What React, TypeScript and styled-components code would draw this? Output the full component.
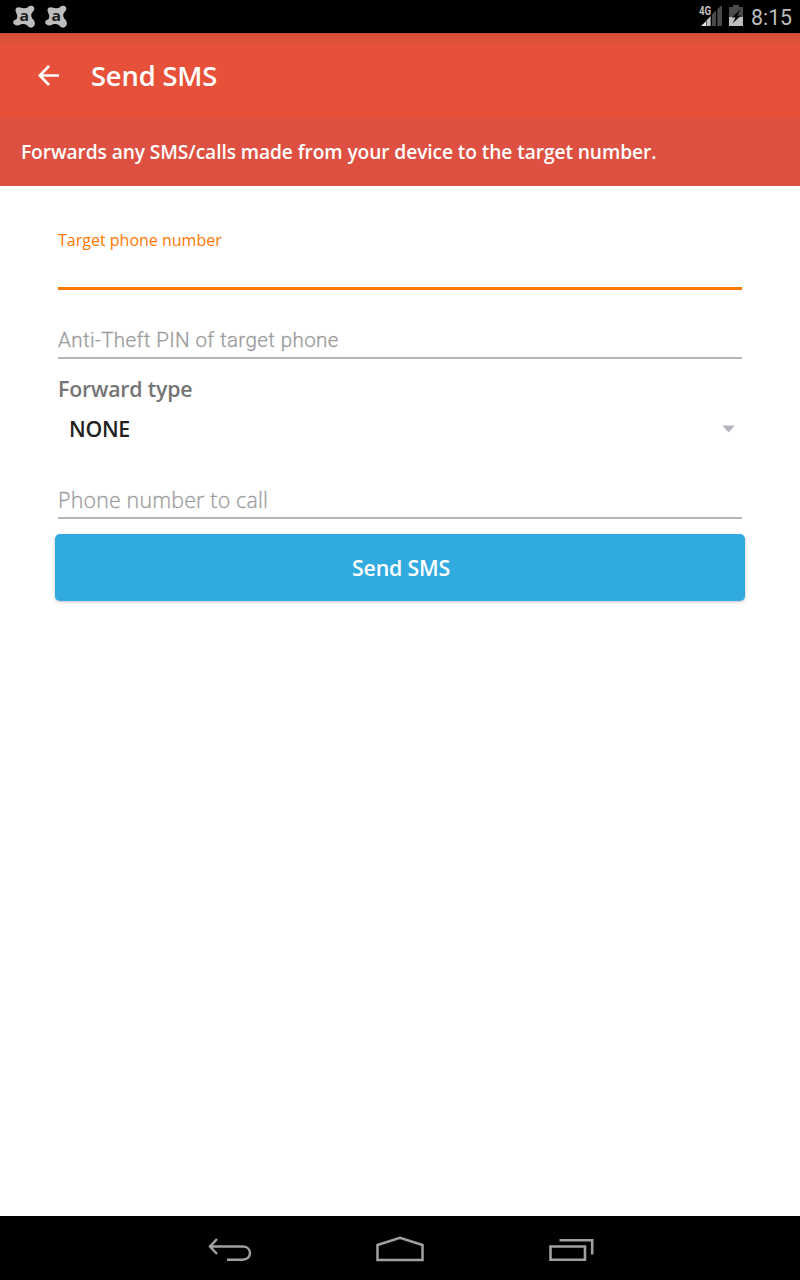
import React from "react";
import styled, { createGlobalStyle } from "styled-components";

const GlobalStyle = createGlobalStyle`
  * { box-sizing: border-box; }
  body { margin: 0; background: #fff; font-family: "Open Sans", sans-serif; }
`;

const Screen = styled.div`
  display: flex;
  flex-direction: column;
  width: 800px;
  height: 1280px;
  background: #fff;
`;

const StatusBar = styled.div`
  display: flex;
  justify-content: space-between;
  height: 33px;
  padding: 0 8px 0 12px;
  background: #000;
`;

const StatusGroup = styled.div<{ $gap: number }>`
  display: flex;
  gap: ${(p) => p.$gap}px;
  padding-top: 4px;
  svg { display: block; flex: none; }
`;

const Clock = styled.span`
  font-family: Roboto, sans-serif;
  font-size: 21.3px;
  line-height: 28px;
  width: 41px;
  margin-left: 1px;
  color: #bebebe;
  white-space: nowrap;
`;

const AppBar = styled.header`
  display: flex;
  align-items: center;
  height: 85px;
  padding-left: 37px;
  background: linear-gradient(#c74a33 0, #d64f39 2px, #dc5139 7px, #df5139 12px, #e75139 12px, #e75139 100%);
  svg { display: block; flex: none; }
`;

const Title = styled.h1`
  margin: 1px 0 0 31px;
  font-size: 27.3px;
  line-height: 36px;
  font-weight: 600;
  letter-spacing: -0.15px;
  color: #fff;
`;

const Banner = styled.p`
  margin: 0;
  height: 68px;
  padding-left: 21px;
  background: #de5142;
  color: #fff;
  font-size: 19.2px;
  line-height: 67px;
  font-weight: 600;
  letter-spacing: -0.1px;
  white-space: nowrap;
`;

const Form = styled.main`
  display: flex;
  flex-direction: column;
  flex: 1;
  padding: 44px 55px 0;
`;

const Field = styled.div<{ $height: number; $active?: boolean }>`
  display: flex;
  align-items: ${(p) => (p.$active ? "flex-start" : "flex-end")};
  height: ${(p) => p.$height}px;
  margin: 0 3px;
  border-bottom: ${(p) => (p.$active ? "3px solid #ff7800" : "2px solid #b5b6bd")};
`;

const FloatingLabel = styled.label`
  font-size: 16px;
  line-height: 20px;
  color: #ff7800;
`;

const Hint = styled.label<{ $roboto?: boolean }>`
  font-family: ${(p) => (p.$roboto ? "Roboto" : '"Open Sans"')}, sans-serif;
  font-weight: 300;
  font-size: ${(p) => (p.$roboto ? 20.6 : 21.33)}px;
  line-height: 24px;
  letter-spacing: ${(p) => (p.$roboto ? 0.37 : 0.2)}px;
  padding-bottom: 5px;
  color: #9c9c9c;
  -webkit-text-stroke: 0.3px #9c9c9c;
`;

const SelectLabel = styled.label`
  margin: 15px 3px 0;
  font-size: 21.33px;
  line-height: 30px;
  font-weight: 600;
  letter-spacing: -0.2px;
  color: #757575;
`;

const Select = styled.div`
  display: flex;
  align-items: center;
  justify-content: space-between;
  height: 40px;
  margin: 5px 10px 0 14px;
  font-size: 21.33px;
  line-height: 30px;
  font-weight: 600;
  letter-spacing: -0.3px;
  color: #212121;
  svg { display: block; }
`;

const SubmitButton = styled.button`
  height: 67px;
  margin-top: 15px;
  padding: 0 0 0 2px;
  border: 0;
  border-radius: 5px;
  background: #31aadf;
  box-shadow: 0 1px 3px rgba(60, 30, 60, 0.3);
  color: #fff;
  font-family: inherit;
  font-size: 21.33px;
  font-weight: 600;
  letter-spacing: -0.2px;
`;

const NavBar = styled.nav`
  display: flex;
  justify-content: center;
  gap: 123px;
  height: 64px;
  padding-top: 18px;
  background: #000;
  svg { display: block; flex: none; }
`;

const AvastIcon = () => (
  <svg width="24" height="25" viewBox="0 0 24 25">
    <path
      d="M4.5 3.8C7 2 10 4.6 13.2 4.3C16 4 16.5 1.5 19.5 1.8C22.3 2.2 23.3 5.2 21.5 7C20 8.6 19 9.8 19.3 12C19.6 15 22.8 15.6 22.9 19.5C22.8 23.4 18.6 25 16 22.3C14.2 20.4 13 19.6 10.5 20C8 20.3 6.8 22 4 21.2C1 20.6.2 17.6 2.4 16.3C4.6 15.4 5.5 14.3 5.2 12C5 9 2 6.4 4.5 3.8Z"
      fill="#bebebe"
    />
    <text x="12.3" y="16.5" textAnchor="middle" fontFamily="Open Sans, sans-serif" fontWeight="700" fontSize="15" textLength="9.5" lengthAdjust="spacingAndGlyphs" fill="#1c1c1c">a</text>
  </svg>
);

const SignalIcon = () => (
  <svg width="24" height="24" viewBox="0 0 24 24">
    <path d="M2 22L7 17.2V22Z" fill="#e8e8e8" />
    <path d="M7.5 16.5L11.7 12V22H7.5Z" fill="#bebebe" />
    <path d="M13 10.6L17 6.5V22H13Z M18.3 5.2L23 1V22H18.3Z" fill="#484b49" />
    <text x="0" y="11.3" fontFamily="Roboto, sans-serif" fontWeight="700" fontSize="13" textLength="12.3" lengthAdjust="spacingAndGlyphs" fill="#bebebe">4G</text>
  </svg>
);

const BatteryIcon = () => (
  <svg width="15" height="24" viewBox="0 0 15 24">
    <path d="M4 1H10V3H14V13H0V3H4Z" fill="#484b49" />
    <path d="M0 13H14V22H0Z" fill="#bebebe" />
    <path d="M11.5 5L3 13.5H6.5L3.5 19.5L12 11.5H8.5Z" fill="#080808" />
  </svg>
);

const App = () => (
  <Screen>
    <GlobalStyle />
    <StatusBar>
      <StatusGroup $gap={8}>
        <AvastIcon />
        <AvastIcon />
      </StatusGroup>
      <StatusGroup $gap={6}>
        <SignalIcon />
        <BatteryIcon />
        <Clock>8:15</Clock>
      </StatusGroup>
    </StatusBar>
    <AppBar>
      <svg width="23" height="22" viewBox="0 0 23 22" fill="none" stroke="#fff" strokeWidth="2.6">
        <path d="M12 1L2.8 10.5L12 20M3 10.5H22" />
      </svg>
      <Title>Send SMS</Title>
    </AppBar>
    <Banner>Forwards any SMS/calls made from your device to the target number.</Banner>
    <Form>
      <Field $height={60} $active>
        <FloatingLabel>Target phone number</FloatingLabel>
      </Field>
      <Field $height={69}>
        <Hint $roboto>Anti-Theft PIN of target phone</Hint>
      </Field>
      <SelectLabel>Forward type</SelectLabel>
      <Select>
        NONE
        <svg width="13" height="8" viewBox="0 0 13 8">
          <path d="M.3 .5H12.7L6.5 7.5Z" fill="#b5b6bd" />
        </svg>
      </Select>
      <Field $height={70}>
        <Hint>Phone number to call</Hint>
      </Field>
      <SubmitButton>Send SMS</SubmitButton>
    </Form>
    <NavBar>
      <svg width="46" height="32" viewBox="-1 0 46 32" fill="none" stroke="#a0a0a0" strokeWidth="2.5">
        <path d="M10 5L3 12.5L10 20M2.5 12.5H35.5C45.5 12.5 45.5 25.7 35.5 25.7H20" />
      </svg>
      <svg width="50" height="32" viewBox="0 0 50 32" fill="none" stroke="#a0a0a0" strokeWidth="2.5">
        <path d="M2.5 26V11L25 3.7L47.5 11V26Z" />
      </svg>
      <svg width="46" height="32" viewBox="-1 0 46 32" fill="none" stroke="#a0a0a0" strokeWidth="2.6">
        <path d="M1.5 12.5H36V25.7H1.5ZM10.5 6.2H43.2V20.5" />
      </svg>
    </NavBar>
  </Screen>
);

export default App;
